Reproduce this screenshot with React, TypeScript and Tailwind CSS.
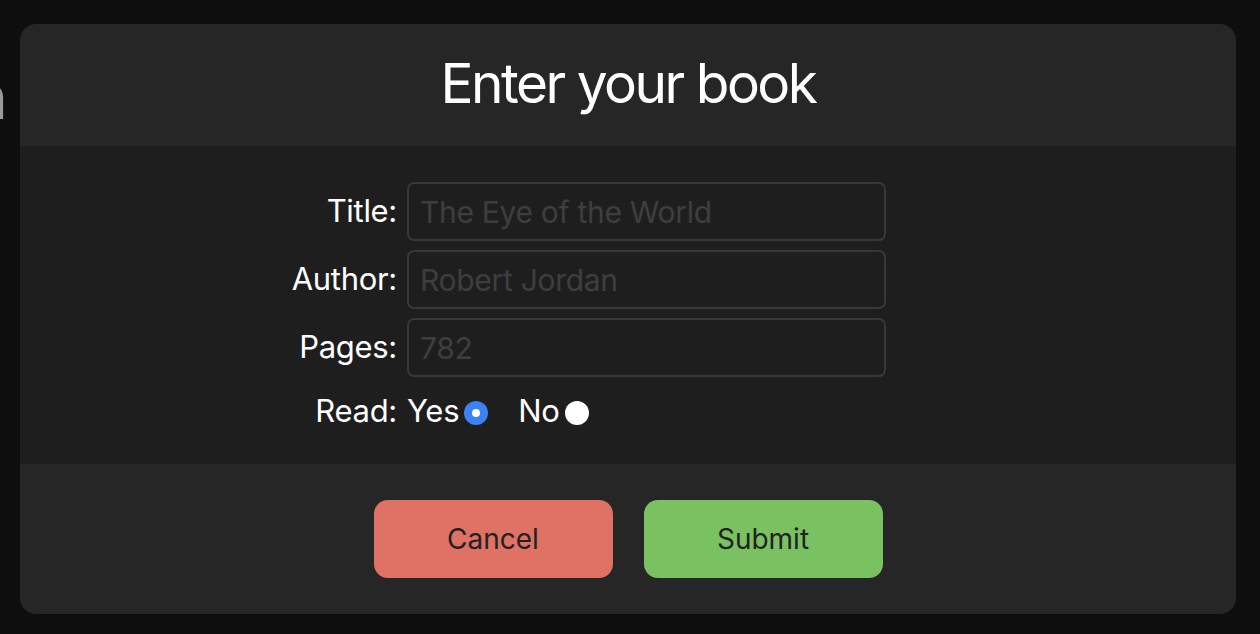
import { useState } from 'react'

const fields = [
  { label: 'Title:', placeholder: 'The Eye of the World' },
  { label: 'Author:', placeholder: 'Robert Jordan' },
  { label: 'Pages:', placeholder: '782' },
]

const App = () => {
  const [read, setRead] = useState(true)

  return (
    <div
      className="relative w-full h-[634px] bg-[#0e0e0e] overflow-hidden pt-[24px] px-[20px]"
      style={{ fontFamily: 'Inter, "Noto Sans", sans-serif' }}
    >
      {/* page text behind the modal */}
      <span className="absolute top-[66px] right-[1252px] text-[62px] leading-none text-[#9a9a9a]">
        n
      </span>

      <div className="relative w-[1216px] h-[590px] rounded-[16px] overflow-hidden flex flex-col">
        <div className="h-[122px] bg-[#262626] flex items-center justify-center">
          <h1 className="text-[55px] text-white leading-none tracking-[-2.5px] -mt-[3px]">
            Enter your book
          </h1>
        </div>

        <div className="h-[318px] bg-[#1e1e1e] pt-[36px] pl-[268px]">
          <div className="grid grid-cols-[109px_479px] gap-x-[10px] gap-y-[9px] items-center">
            {fields.map((f) => (
              <div key={f.label} className="contents">
                <label className="text-right text-[31px] tracking-[-0.3px] text-white whitespace-nowrap">
                  {f.label}
                </label>
                <input
                  placeholder={f.placeholder}
                  className="h-[59px] rounded-[7px] border-2 border-[#383838] bg-transparent px-[11px] text-[30px] tracking-[-0.3px] text-white placeholder:text-[#3e3e3e] outline-none"
                />
              </div>
            ))}
            <label className="text-right text-[31px] tracking-[-0.3px] text-white mt-[2px]">Read:</label>
            <div className="flex items-center text-[31px] tracking-[-0.3px] text-white mt-[2px]">
              <span>Yes</span>
              <button
                onClick={() => setRead(true)}
                className={`ml-[5px] w-[24px] h-[24px] rounded-full flex items-center justify-center mt-[4px] ${
                  read ? 'bg-[#3b82f6]' : 'bg-white'
                }`}
              >
                {read && <span className="w-[8px] h-[8px] rounded-full bg-white" />}
              </button>
              <span className="ml-[30px]">No</span>
              <button
                onClick={() => setRead(false)}
                className={`ml-[5px] w-[24px] h-[24px] rounded-full flex items-center justify-center mt-[4px] ${
                  !read ? 'bg-[#3b82f6]' : 'bg-white'
                }`}
              >
                {!read && <span className="w-[8px] h-[8px] rounded-full bg-white" />}
              </button>
            </div>
          </div>
        </div>

        <div className="flex-1 bg-[#262626] flex items-center justify-center gap-[31px]">
          <button className="w-[239px] h-[78px] rounded-[14px] bg-[#df7165] text-[28px] text-[#222222]">
            Cancel
          </button>
          <button className="w-[239px] h-[78px] rounded-[14px] bg-[#7ac162] text-[28px] text-[#222222]">
            Submit
          </button>
        </div>
      </div>
    </div>
  )
}

export default App
